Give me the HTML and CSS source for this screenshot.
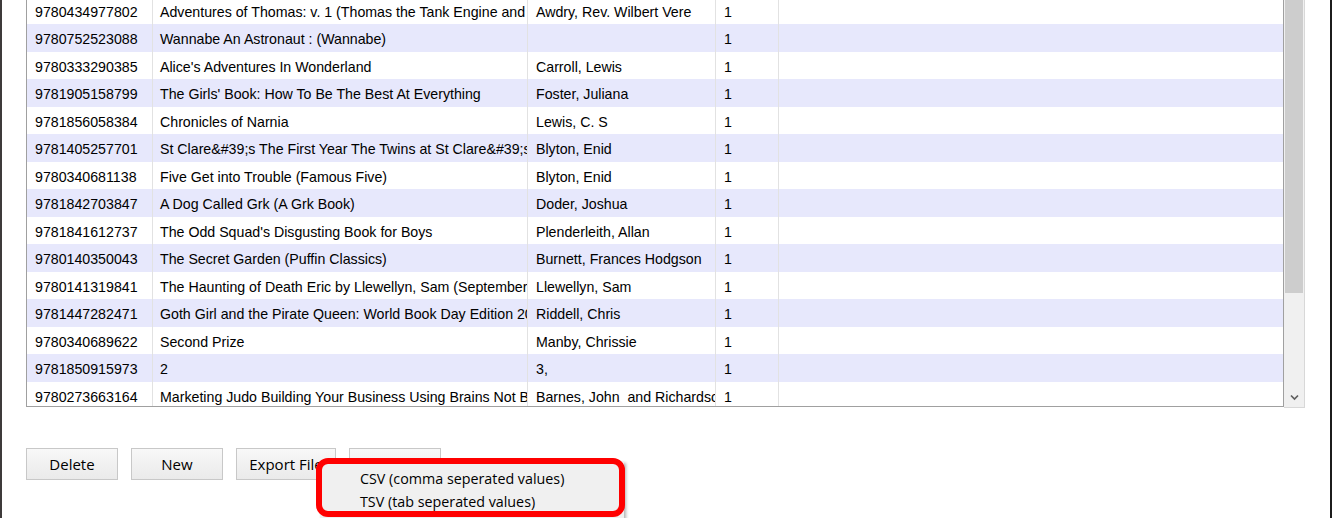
FILE: index.html
```html
<!DOCTYPE html>
<html lang="en">
<head>
    <meta charset="UTF-8">
    <title>Books</title>
    <link rel="stylesheet" href="styles.css">
</head>
<body>
    <div class="window">
        <div class="grid">
            <div class="rows">
                <div class="rows-inner">
                    <div class="row"><span class="cell">9780434977802</span><span class="cell">Adventures of Thomas: v. 1 (Thomas the Tank Engine and Friends)</span><span class="cell">Awdry, Rev. Wilbert Vere</span><span class="cell">1</span><span class="cell"></span></div>
                    <div class="row alt"><span class="cell">9780752523088</span><span class="cell">Wannabe An Astronaut : (Wannabe)</span><span class="cell"></span><span class="cell">1</span><span class="cell"></span></div>
                    <div class="row"><span class="cell">9780333290385</span><span class="cell">Alice's Adventures In Wonderland</span><span class="cell">Carroll, Lewis</span><span class="cell">1</span><span class="cell"></span></div>
                    <div class="row alt"><span class="cell">9781905158799</span><span class="cell">The Girls' Book: How To Be The Best At Everything</span><span class="cell">Foster, Juliana</span><span class="cell">1</span><span class="cell"></span></div>
                    <div class="row"><span class="cell">9781856058384</span><span class="cell">Chronicles of Narnia</span><span class="cell">Lewis, C. S</span><span class="cell">1</span><span class="cell"></span></div>
                    <div class="row alt"><span class="cell">9781405257701</span><span class="cell">St Clare&amp;#39;s The First Year The Twins at St Clare&amp;#39;s</span><span class="cell">Blyton, Enid</span><span class="cell">1</span><span class="cell"></span></div>
                    <div class="row"><span class="cell">9780340681138</span><span class="cell">Five Get into Trouble (Famous Five)</span><span class="cell">Blyton, Enid</span><span class="cell">1</span><span class="cell"></span></div>
                    <div class="row alt"><span class="cell">9781842703847</span><span class="cell">A Dog Called Grk (A Grk Book)</span><span class="cell">Doder, Joshua</span><span class="cell">1</span><span class="cell"></span></div>
                    <div class="row"><span class="cell">9781841612737</span><span class="cell">The Odd Squad's Disgusting Book for Boys</span><span class="cell">Plenderleith, Allan</span><span class="cell">1</span><span class="cell"></span></div>
                    <div class="row alt"><span class="cell">9780140350043</span><span class="cell">The Secret Garden (Puffin Classics)</span><span class="cell">Burnett, Frances Hodgson</span><span class="cell">1</span><span class="cell"></span></div>
                    <div class="row"><span class="cell">9780141319841</span><span class="cell">The Haunting of Death Eric by Llewellyn, Sam (September 2007)</span><span class="cell">Llewellyn, Sam</span><span class="cell">1</span><span class="cell"></span></div>
                    <div class="row alt"><span class="cell">9781447282471</span><span class="cell">Goth Girl and the Pirate Queen: World Book Day Edition 2015</span><span class="cell">Riddell, Chris</span><span class="cell">1</span><span class="cell"></span></div>
                    <div class="row"><span class="cell">9780340689622</span><span class="cell">Second Prize</span><span class="cell">Manby, Chrissie</span><span class="cell">1</span><span class="cell"></span></div>
                    <div class="row alt"><span class="cell">9781850915973</span><span class="cell">2</span><span class="cell">3,</span><span class="cell">1</span><span class="cell"></span></div>
                    <div class="row"><span class="cell">9780273663164</span><span class="cell">Marketing Judo Building Your Business Using Brains Not Budget</span><span class="cell">Barnes, John  and Richardson, Neil</span><span class="cell">1</span><span class="cell"></span></div>
                </div>
            </div>
            <div class="scrollbar">
                <div class="thumb"></div>
                <div class="track"></div>
                <div class="arrow">
                    <svg width="9" height="7" viewBox="0 0 9 7"><path d="M1 1.5 L4.5 5 L8 1.5" fill="none" stroke="#5f5f5f" stroke-width="1.7"/></svg>
                </div>
            </div>
        </div>

        <div class="buttons">
            <button type="button" class="btn">Delete</button>
            <button type="button" class="btn">New</button>
            <button type="button" class="btn btn-wide">Export File</button>
            <button type="button" class="btn">Import File</button>
        </div>

        <div class="menu">
            <div class="menu-item">CSV (comma seperated values)</div>
            <div class="menu-item">TSV (tab seperated values)</div>
        </div>
        <div class="highlight"></div>
    </div>
</body>
</html>
```

FILE: styles.css
```css
body {
    margin: 0;
    background: #fff;
    overflow: hidden;
}
.window {
    position: relative;
    width: 1332px;
    height: 518px;
    box-sizing: border-box;
    padding-left: 24px;
    border-left: 2px solid #3e3a3a;
    border-right: 2px solid #1c1c1c;
    background: #fff;
    font-family: "Liberation Sans", Arial, sans-serif;
    font-size: 14.2px;
    color: #000;
}
.grid {
    display: flex;
    height: 408px;
}
.rows {
    width: 1258px;
    height: 407px;
    box-sizing: border-box;
    border: 1px solid #a0a0a0;
    border-top: none;
    overflow: hidden;
}
.rows-inner {
    margin-top: -3.5px;
}
.row {
    display: grid;
    grid-template-columns: 126px 375px 188px 63px 1fr;
    height: 27.5px;
}
.row.alt {
    background: #e7e8fc;
}
.cell {
    box-sizing: border-box;
    height: 27.5px;
    padding: 4px 0 0 8px;
    line-height: 23px;
    white-space: pre;
    overflow: hidden;
    text-overflow: clip;
    border-right: 1px solid #e2e2e2;
}
.cell:nth-child(2) {
    padding-left: 7px;
}
.cell:last-child {
    border-right: none;
}
.scrollbar {
    width: 21px;
    height: 408px;
    box-sizing: border-box;
    display: flex;
    flex-direction: column;
    background: #f0f0f0;
    border-right: 1px solid #d8d8d8;
    border-bottom: 1px solid #d8d8d8;
}
.thumb {
    height: 293px;
    margin: 0 1px;
    background: #cdcdcd;
}
.track {
    flex: 1;
}
.arrow {
    height: 20px;
    display: flex;
    align-items: center;
    justify-content: center;
}
.buttons {
    display: flex;
    gap: 13px;
    margin-top: 40px;
}
.btn {
    width: 92px;
    height: 32px;
    padding: 0;
    border: 1px solid #c8c8c8;
    background: linear-gradient(#f8f8f8, #eaeaea);
    font-family: "Open Sans", "Noto Sans", sans-serif;
    font-size: 15px;
    color: #000;
}
.btn-wide {
    width: 100px;
}
.menu {
    position: absolute;
    left: 318px;
    top: 461px;
    width: 304px;
    padding: 6px 0;
    background: #f0f0f0;
    box-shadow: 2px 2px 3px rgba(0, 0, 0, 0.3);
    font-family: "Open Sans", "Noto Sans", sans-serif;
    font-size: 14.3px;
    color: #000;
}
.menu-item {
    height: 23px;
    line-height: 23px;
    padding-left: 40px;
}
.highlight {
    position: absolute;
    left: 314px;
    top: 458px;
    width: 309px;
    height: 59px;
    box-sizing: border-box;
    border: 6px solid #f00;
    border-radius: 12px;
}
```
